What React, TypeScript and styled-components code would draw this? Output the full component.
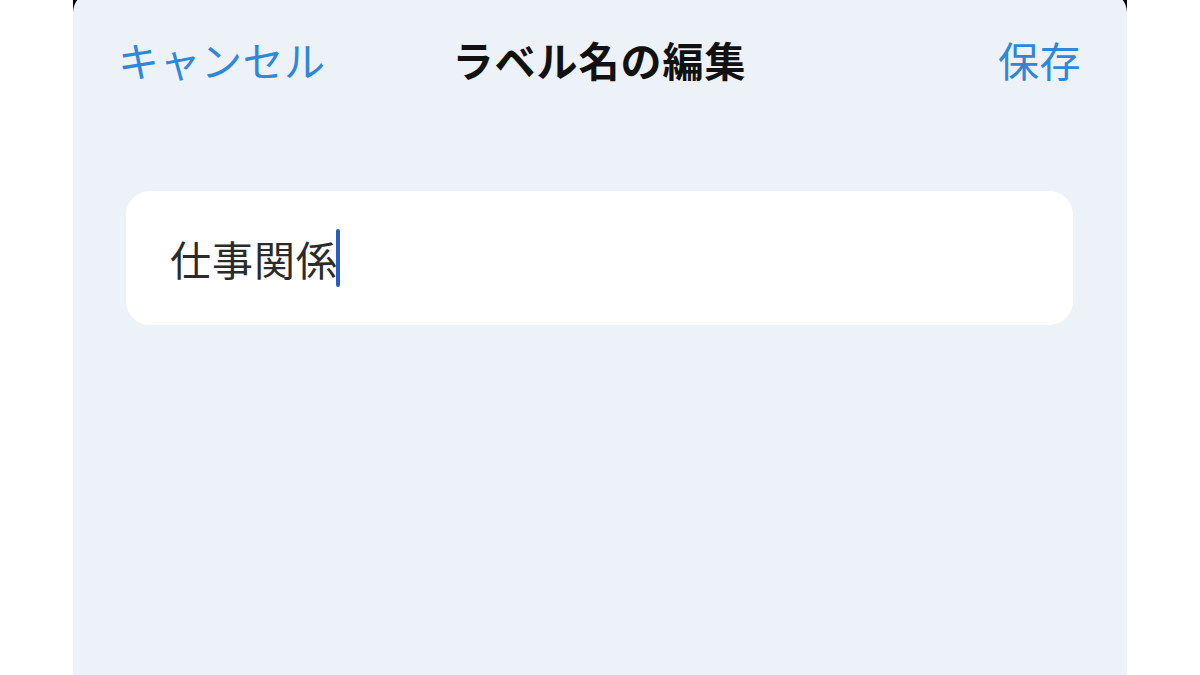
import React from "react";
import styled, { createGlobalStyle } from "styled-components";

const Global = createGlobalStyle`
  html, body { margin: 0; padding: 0; background: #ffffff; }
  body { width: 1200px; height: 675px; overflow: hidden; }
  #root { width: 1200px; height: 675px; }
`;

const Page = styled.div`
  width: 1200px;
  height: 675px;
  display: flex;
  justify-content: center;
  background: #ffffff;
`;

const Frame = styled.div`
  width: 1054px;
  height: 675px;
  background: #000000;
  overflow: hidden;
  display: flex;
  flex-direction: column;
`;

const Sheet = styled.div`
  flex: 1;
  margin-top: -9px;
  padding-top: 9px;
  background: #edf2f8;
  border-radius: 22px 22px 0 0;
  display: flex;
  flex-direction: column;
  font-family: "Noto Sans CJK JP", "Noto Sans", sans-serif;
`;

const Header = styled.div`
  height: 118px;
  display: grid;
  grid-template-columns: 1fr auto 1fr;
  align-items: center;
  padding: 0 46px 0 45px;
`;

const NavButton = styled.span<{ $align: "left" | "right" }>`
  font-size: 41px;
  font-weight: 400;
  color: #2f87db;
  justify-self: ${(p) => (p.$align === "left" ? "start" : "end")};
  line-height: 1;
  letter-spacing: 0.5px;
`;

const Title = styled.span`
  font-size: 41px;
  font-weight: 700;
  color: #111111;
  line-height: 1;
  letter-spacing: 1px;
`;

const Field = styled.div`
  margin: 73px 54px 0 53px;
  height: 134px;
  background: #ffffff;
  border-radius: 24px;
  display: flex;
  align-items: center;
  padding-left: 44px;
`;

const FieldText = styled.span`
  font-size: 41px;
  color: #2b2b2b;
  line-height: 1;
  letter-spacing: 1px;
`;

const Caret = styled.span`
  display: inline-block;
  width: 4px;
  height: 58px;
  border-radius: 2px;
  background: #2a5cc4;
  margin-left: -2px;
`;

export default function App() {
  return (
    <>
      <Global />
      <Page>
        <Frame>
          <Sheet>
            <Header>
              <NavButton $align="left">キャンセル</NavButton>
              <Title>ラベル名の編集</Title>
              <NavButton $align="right">保存</NavButton>
            </Header>
            <Field>
              <FieldText>仕事関係</FieldText>
              <Caret />
            </Field>
          </Sheet>
        </Frame>
      </Page>
    </>
  );
}
